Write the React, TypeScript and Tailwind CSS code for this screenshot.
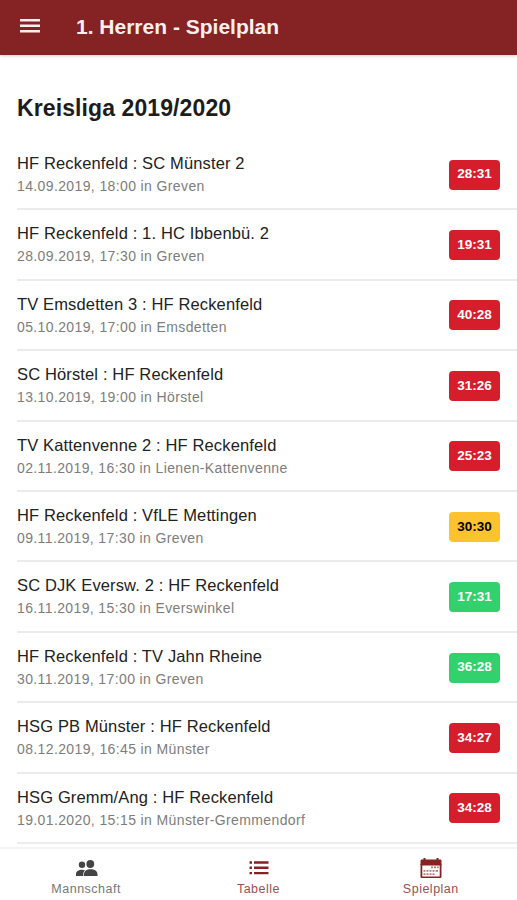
import React from 'react';

type Match = {
  teams: string;
  info: string;
  score: string;
  result: 'win' | 'draw' | 'loss';
};

const matches: Match[] = [
  { teams: 'HF Reckenfeld : SC Münster 2', info: '14.09.2019, 18:00 in Greven', score: '28:31', result: 'loss' },
  { teams: 'HF Reckenfeld : 1. HC Ibbenbü. 2', info: '28.09.2019, 17:30 in Greven', score: '19:31', result: 'loss' },
  { teams: 'TV Emsdetten 3 : HF Reckenfeld', info: '05.10.2019, 17:00 in Emsdetten', score: '40:28', result: 'loss' },
  { teams: 'SC Hörstel : HF Reckenfeld', info: '13.10.2019, 19:00 in Hörstel', score: '31:26', result: 'loss' },
  { teams: 'TV Kattenvenne 2 : HF Reckenfeld', info: '02.11.2019, 16:30 in Lienen-Kattenvenne', score: '25:23', result: 'loss' },
  { teams: 'HF Reckenfeld : VfLE Mettingen', info: '09.11.2019, 17:30 in Greven', score: '30:30', result: 'draw' },
  { teams: 'SC DJK Eversw. 2 : HF Reckenfeld', info: '16.11.2019, 15:30 in Everswinkel', score: '17:31', result: 'win' },
  { teams: 'HF Reckenfeld : TV Jahn Rheine', info: '30.11.2019, 17:00 in Greven', score: '36:28', result: 'win' },
  { teams: 'HSG PB Münster : HF Reckenfeld', info: '08.12.2019, 16:45 in Münster', score: '34:27', result: 'loss' },
  { teams: 'HSG Gremm/Ang : HF Reckenfeld', info: '19.01.2020, 15:15 in Münster-Gremmendorf', score: '34:28', result: 'loss' },
];

const badgeColors = {
  win: 'bg-[#32d16d] text-white',
  draw: 'bg-[#fdc22f] text-black',
  loss: 'bg-[#d51d2c] text-white',
};

const MenuIcon = () => (
  <svg width="20" height="14" viewBox="0 0 20 14" fill="#fbeeee">
    <path d="M0 0h20v2.500H0zM0 5.500h20v2.500H0zM0 11h20v2.500H0z" />
  </svg>
);

const PeopleIcon = () => (
  <svg width="22" height="17" viewBox="0 0 22 17" fill="currentColor">
    <circle cx="6" cy="4.800" r="3.200" />
    <circle cx="14.300" cy="4" r="3.900" />
    <path d="M7.300 15.900H0v-1.800c0-2.600 2.600-4.400 6-4.400 1.200 0 2.300.2 3.200.6-1.300 1-1.900 2.400-1.900 4z" />
    <path d="M8 15.900v-1.600c0-3.100 2.700-5 6.600-5s6.900 1.900 6.900 5v1.600z" />
  </svg>
);

const ListIcon = () => (
  <svg width="20" height="14" viewBox="0 0 20 14" fill="currentColor">
    <path d="M0.500 0.300H3v2.400H0.500zM5 0.300h14.500v2.400H5zM0.500 5.600H3V8H0.500zM5 5.600h14.500V8H5zM0.500 10.900H3v2.400H0.500zM5 10.900h14.500v2.400H5z" />
  </svg>
);

const CalendarIcon = () => (
  <svg width="22" height="21" viewBox="0 0 22 21" fill="currentColor">
    <path d="M3.500 0h2v1.500h11V0h2v1.500h1.700c.7 0 1.300.6 1.300 1.300V7H.5V2.800c0-.7.6-1.300 1.300-1.300h1.700z" />
    <path fillRule="evenodd" d="M.5 6h21v12.700c0 .7-.6 1.300-1.300 1.300H1.800c-.7 0-1.300-.6-1.300-1.300zM2.300 7.500v11h17.400v-11z" />
    <path opacity="0.6" d="M11 8.500h2v1.700h-2zM14 8.500h2v1.700h-2zM17 8.500h1.700v1.700H17zM3.500 12h2v1.700h-2zM6.500 12h2v1.700h-2zM9.500 12h2v1.700h-2zM12.500 12h2v1.700h-2zM15.500 12h2.500v1.700h-2.500zM3.500 15.300h2V17h-2zM6.500 15.300h2V17h-2zM9.500 15.300h2V17h-2zM12.500 15.300h2V17h-2z" />
  </svg>
);

const MatchRow = ({ match }: { match: Match }) => (
  <li className="ml-[17px] pr-[17px] h-[70.43px] shrink-0 flex items-center justify-between border-b-2 border-[#ebebeb]">
    <div className="pt-[0.5px]">
      <div className="text-[16.5px] leading-[23px] tracking-[0.14px] text-[#222]">{match.teams}</div>
      <div className="text-[14px] leading-[22px] tracking-[0.38px] text-[#7d7d7d]">{match.info}</div>
    </div>
    <span className={`w-[51px] h-[30px] mt-px rounded-[4px] flex items-center justify-center text-[13.5px] font-bold ${badgeColors[match.result]}`}>
      {match.score}
    </span>
  </li>
);

const App = () => {
  return (
    <div className="h-[900px] w-full flex flex-col overflow-hidden bg-white font-['Liberation_Sans',Arial,sans-serif]">
      <header className="h-[55px] shrink-0 flex items-center pl-5 bg-[#842224] shadow-[0_1px_3px_rgba(0,0,0,0.2)]">
        <div className="pb-1">
          <MenuIcon />
        </div>
        <h1 className="ml-[36px] pb-px text-[21px] font-bold text-[#fbeeee]">1. Herren - Spielplan</h1>
      </header>

      <main className="flex-1 min-h-0 overflow-hidden flex flex-col">
        <h2 className="pl-[17px] pt-[38px] h-[84.9px] shrink-0 text-[23px] leading-[30px] tracking-[0.1px] font-bold text-[#1c1c1c]">Kreisliga 2019/2020</h2>
        <ul className="flex flex-col">
          {matches.map((match) => (
            <MatchRow key={match.info} match={match} />
          ))}
        </ul>
      </main>

      <nav className="h-[53px] shrink-0 grid grid-cols-3 border-t-2 border-[#f3f3f3] bg-white text-[12.5px] leading-[14px] tracking-[0.5px]">
        <a className="flex flex-col items-center text-[#777]">
          <span className="h-[33px] flex items-center pt-1.5 pl-0.5 text-[#444]"><PeopleIcon /></span>
          <span>Mannschaft</span>
        </a>
        <a className="flex flex-col items-center text-[#842224]">
          <span className="h-[33px] flex items-center pt-1 pl-0.5"><ListIcon /></span>
          <span className="text-[#9a4f55]">Tabelle</span>
        </a>
        <a className="flex flex-col items-center text-[#842224]">
          <span className="h-[33px] flex items-center pt-1.5"><CalendarIcon /></span>
          <span className="text-[#9a4f55]">Spielplan</span>
        </a>
      </nav>
    </div>
  );
};

export default App;
